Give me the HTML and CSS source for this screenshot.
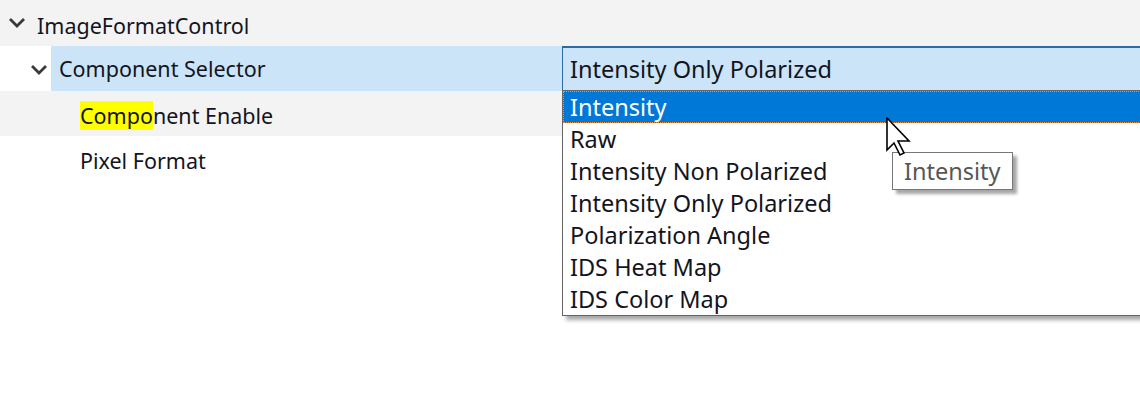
FILE: index.html
```html
<!DOCTYPE html>
<html lang="en">
<head>
  <meta charset="UTF-8" />
  <title>Property Grid – ImageFormatControl</title>
  <link rel="stylesheet" href="styles.css">
</head>
<body>

  <div class="grid">
    <div class="row row-cat">
      <span class="chev chev-cat">
        <svg width="18" height="11" viewBox="0 0 18 11"><polyline points="2,2 9,9 16,2" /></svg>
      </span>
      <span class="label">ImageFormatControl</span>
    </div>

    <div class="row row-sel">
      <div class="name">
        <span class="indent">
          <span class="chev chev-sub">
            <svg width="18" height="11" viewBox="0 0 18 11"><polyline points="2,2 9,9 16,2" /></svg>
          </span>
        </span>
        <span class="name-sel">Component Selector</span>
      </div>
      <div class="value">
        <div class="combo">Intensity Only Polarized</div>
        <ul class="dropdown">
          <li class="active">Intensity</li>
          <li>Raw</li>
          <li>Intensity Non Polarized</li>
          <li>Intensity Only Polarized</li>
          <li>Polarization Angle</li>
          <li>IDS Heat Map</li>
          <li>IDS Color Map</li>
        </ul>
      </div>
    </div>

    <div class="row row-alt">
      <div class="name leaf"><span class="hit">Compo</span>nent Enable</div>
    </div>

    <div class="row">
      <div class="name leaf">Pixel Format</div>
    </div>
  </div>

  <!-- hover tooltip + mouse pointer -->
  <div class="tooltip">Intensity</div>
  <svg class="cursor" width="26" height="40" viewBox="0 0 26 40">
    <path d="M1,1 V33 L8,26 L14,38 L18,36 L12,24 H23 Z" />
  </svg>

</body>
</html>
```

FILE: styles.css
```css
body {
  margin: 0;
  padding: 0;
  background: #fff;
  font-family: "Noto Sans", "Open Sans", sans-serif;
  font-size: 21.5px;
  color: #14141e;
  position: relative;
  height: 398px;
  overflow: hidden;
}

.grid {
  width: 1140px;
}

.row {
  height: 45px;
  display: flex;
  align-items: center;
}

.row-cat {
  height: 46px;
  background: #f3f3f3;
}

.row-alt {
  background: #f3f3f3;
}

.chev svg {
  display: block;
  fill: none;
  stroke: #3a3a3a;
  stroke-width: 2.8;
}

.chev-cat {
  margin-left: 8px;
  margin-right: 11px;
  margin-top: -2px;
}

.label {
  padding-top: 4px;
}

.row-sel {
  align-items: stretch;
}

.row-sel .name {
  width: 562px;
  display: flex;
  align-items: stretch;
}

.indent {
  width: 51px;
  display: flex;
  align-items: center;
}

.chev-sub {
  margin-left: 30px;
  margin-top: 2px;
}

.name-sel {
  flex: 1;
  background: #cce4f7;
  padding-left: 8px;
  display: flex;
  align-items: center;
}

.value {
  flex: 1;
  position: relative;
  font-size: 23.5px;
}

.combo {
  height: 42px;
  background: #cce4f7;
  border-top: 2px solid #2c6ba3;
  border-left: 1px solid #2c6ba3;
  border-bottom: 1px solid #a9b6c2;
  padding-left: 7px;
  display: flex;
  align-items: center;
}

.dropdown {
  position: absolute;
  top: 44px;
  left: 0;
  width: 600px;
  margin: 0;
  padding: 0;
  list-style: none;
  background: #fff;
  border: 1px solid #646464;
  box-shadow: 4px 4px 4px rgba(0, 0, 0, 0.35);
  z-index: 2;
}

.dropdown li {
  height: 32px;
  padding-left: 7px;
  display: flex;
  align-items: center;
}

.dropdown li.active {
  background: #0078d7;
  color: #fff;
  outline: 1px dotted #f3953c;
  outline-offset: -1px;
}

.leaf {
  padding-left: 80px;
  padding-top: 3px;
}

.hit {
  background: #ffff00;
}

.tooltip {
  position: absolute;
  left: 892px;
  top: 152px;
  width: 108px;
  height: 36px;
  padding-left: 11px;
  background: #fff;
  border: 1px solid #767676;
  box-shadow: 4px 4px 3px rgba(0, 0, 0, 0.35);
  color: #575757;
  font-size: 23.5px;
  display: flex;
  align-items: center;
  z-index: 3;
}

.cursor {
  position: absolute;
  left: 886px;
  top: 117px;
  z-index: 4;
}

.cursor path {
  fill: #fff;
  stroke: #000;
  stroke-width: 1.6;
  stroke-linejoin: miter;
}
```
